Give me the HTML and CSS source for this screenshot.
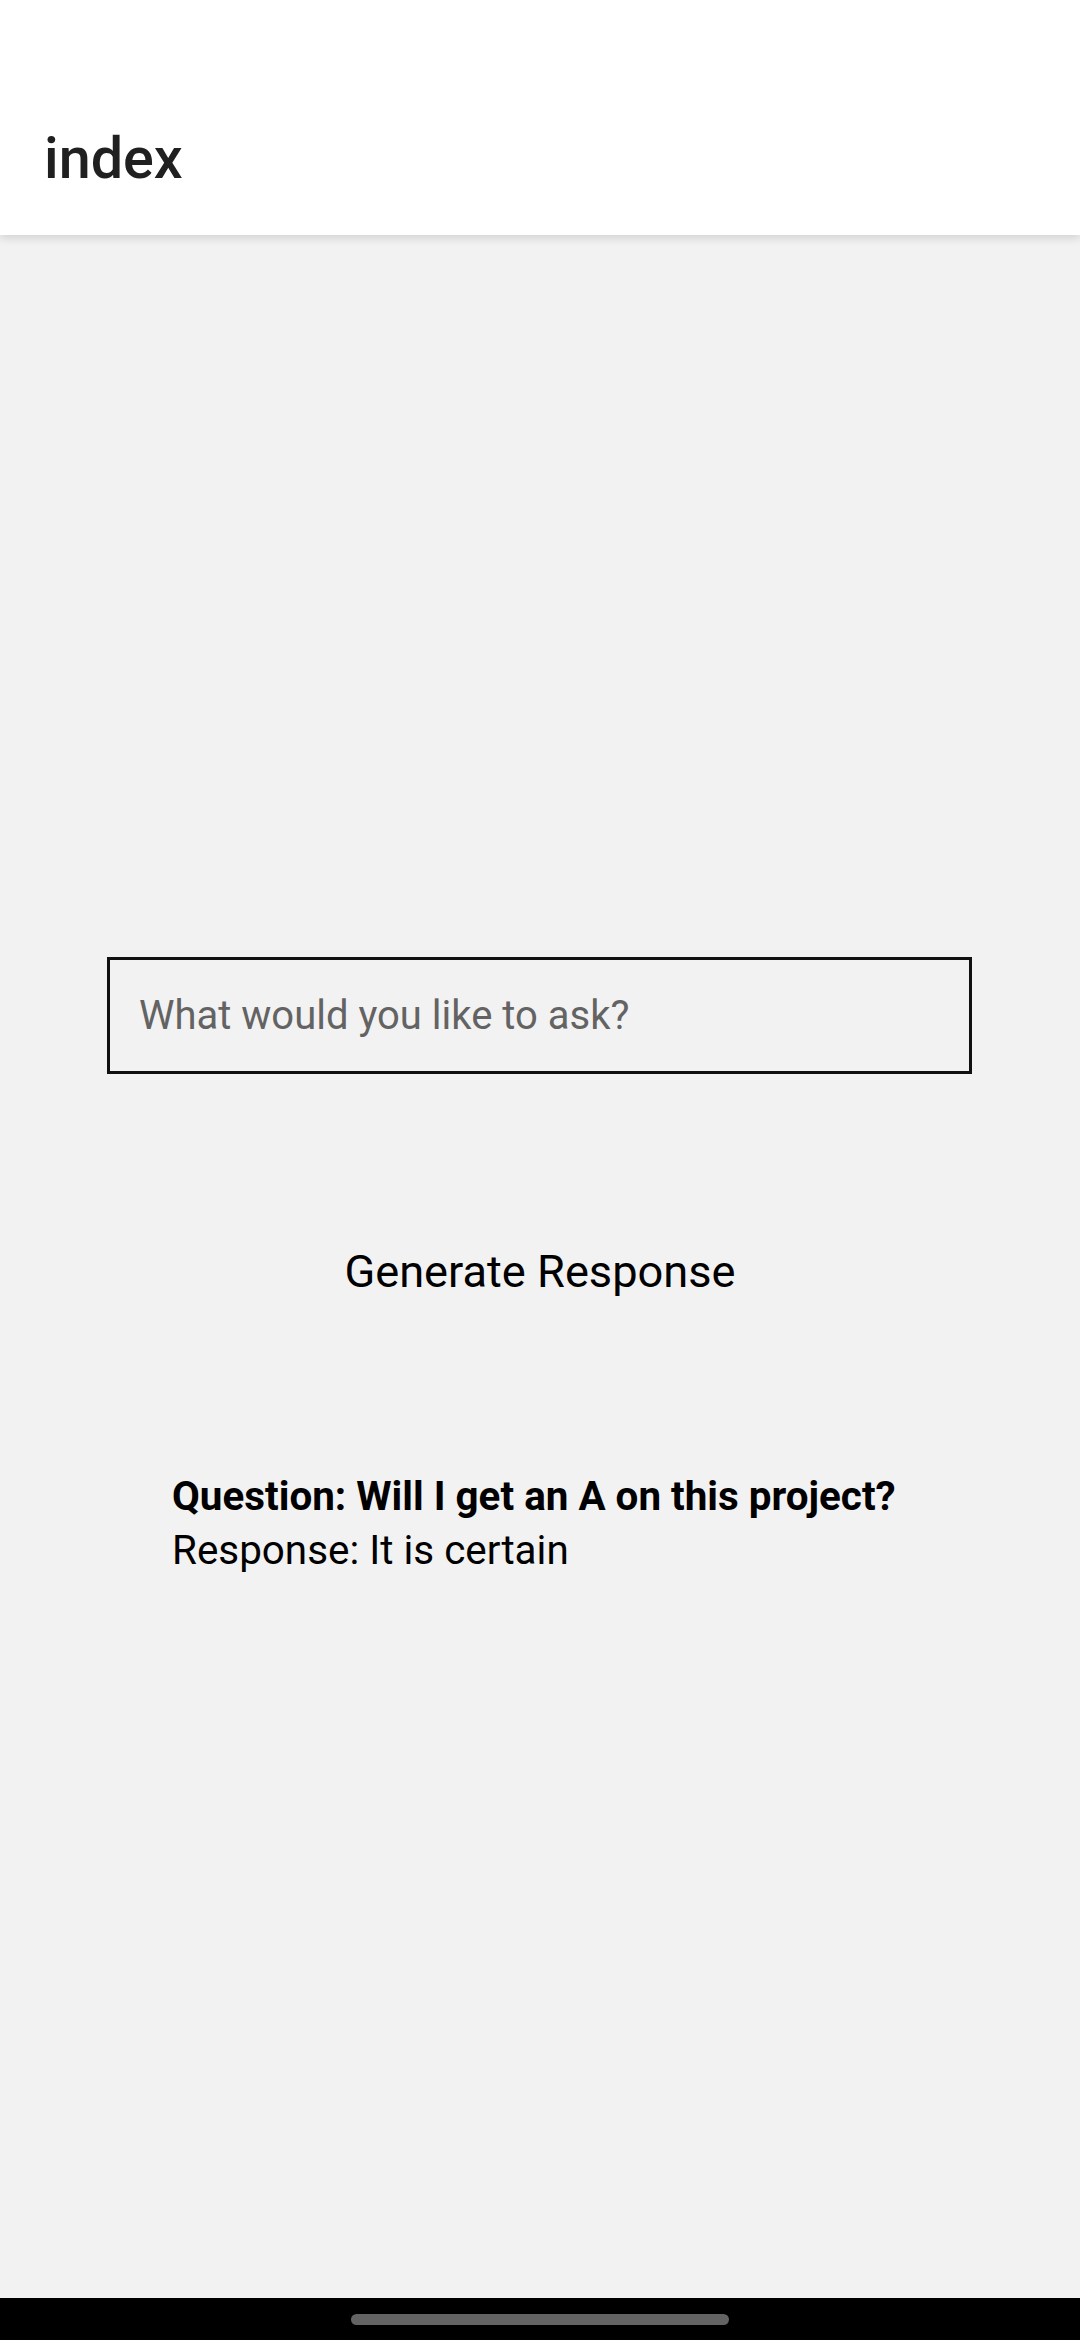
FILE: index.html
```html
<!DOCTYPE html>
<html lang="en">
<head>
<meta charset="utf-8">
<title>index</title>
<link rel="stylesheet" href="styles.css">
</head>
<body>
<div class="app">
  <header class="appbar">
    <h1 class="title">index</h1>
  </header>
  <main class="content">
    <div class="field">
      <input class="ask" type="text" placeholder="What would you like to ask?">
    </div>
    <button class="generate" type="button">Generate Response</button>
    <div class="result">
      <p class="question">Question: Will I get an A on this project?</p>
      <p class="response">Response: It is certain</p>
    </div>
  </main>
  <div class="navbar"><span class="handle"></span></div>
</div>
</body>
</html>
```

FILE: styles.css
```css
html, body {
  margin: 0;
  padding: 0;
}
body {
  font-family: Roboto, "Noto Sans", "Liberation Sans", sans-serif;
  background: #f2f2f2;
}
.app {
  width: 1080px;
  height: 2340px;
  display: flex;
  flex-direction: column;
  overflow: hidden;
}
.appbar {
  height: 235px;
  box-sizing: border-box;
  background: #ffffff;
  padding: 126px 0 0 44px;
  box-shadow: 0 3px 9px rgba(0, 0, 0, 0.14);
  position: relative;
  z-index: 1;
  flex: none;
}
.title {
  margin: 0;
  font-size: 57.5px;
  line-height: 66px;
  font-weight: 500;
  color: #202020;
}
.content {
  flex: 1;
  display: flex;
  flex-direction: column;
  background: #f2f2f2;
}
.field {
  margin: 722px 0 0 107px;
}
.ask {
  width: 865px;
  height: 117px;
  box-sizing: border-box;
  border: 3px solid #111111;
  background: transparent;
  padding: 0 0 0 29px;
  margin: 0;
  font-family: inherit;
  font-size: 40px;
  color: #222;
  outline: none;
  border-radius: 0;
}
.ask::placeholder {
  color: #636363;
  opacity: 1;
}
.generate {
  align-self: center;
  margin: 173px 0 0 0;
  padding: 0;
  border: none;
  background: transparent;
  font-family: inherit;
  font-size: 45.2px;
  line-height: 49px;
  color: #000;
}
.result {
  margin: 174px 0 0 172px;
}
.question, .response {
  margin: 0;
  font-size: 40.4px;
  line-height: 54px;
  color: #000;
}
.question {
  font-weight: 700;
}
.navbar {
  flex: none;
  height: 42px;
  background: #000;
  display: flex;
  align-items: center;
  justify-content: center;
}
.handle {
  width: 378px;
  height: 11px;
  border-radius: 6px;
  background: #636363;
}
```
